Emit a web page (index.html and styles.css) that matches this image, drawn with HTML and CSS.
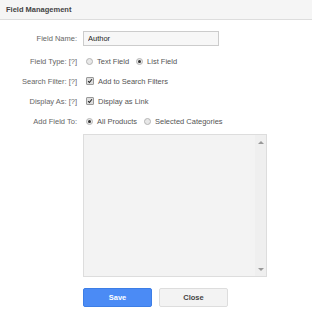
FILE: index.html
```html
<!DOCTYPE html>
<html lang="en">
<head>
    <meta charset="UTF-8">
    <title>Field Management</title>
    <link rel="stylesheet" href="styles.css">
</head>
<body>
<div class="panel">
    <div class="panelHead">Field Management</div>
    <form class="fieldForm">
        <div class="row rowInput">
            <label class="lbl">Field Name:</label>
            <div class="ctl"><input class="txt" type="text" value="Author"></div>
        </div>
        <div class="row">
            <span class="lbl">Field Type: [?]</span>
            <div class="ctl">
                <span class="radio"></span><span class="opt">Text Field</span>
                <span class="radio on"></span><span class="opt">List Field</span>
            </div>
        </div>
        <div class="row">
            <span class="lbl">Search Filter: [?]</span>
            <div class="ctl">
                <span class="check"><svg width="8" height="8" viewBox="0 0 8 8"><path d="M1.5 4.2 L3.2 6 L6.6 1.6" fill="none" stroke="#222" stroke-width="1.4"/></svg></span><span class="opt">Add to Search Filters</span>
            </div>
        </div>
        <div class="row">
            <span class="lbl">Display As: [?]</span>
            <div class="ctl">
                <span class="check"><svg width="8" height="8" viewBox="0 0 8 8"><path d="M1.5 4.2 L3.2 6 L6.6 1.6" fill="none" stroke="#222" stroke-width="1.4"/></svg></span><span class="opt">Display as Link</span>
            </div>
        </div>
        <div class="row">
            <span class="lbl">Add Field To:</span>
            <div class="ctl">
                <span class="radio on"></span><span class="opt">All Products</span>
                <span class="radio"></span><span class="opt">Selected Categories</span>
            </div>
        </div>
        <div class="row rowList">
            <span class="lbl"></span>
            <div class="listBox">
                <div class="listArea"></div>
                <div class="scrollBar">
                    <span class="arrUp"></span>
                    <span class="arrDown"></span>
                </div>
            </div>
        </div>
        <div class="row rowBtns">
            <span class="lbl"></span>
            <div class="ctl">
                <button type="button" class="btn btnSave">Save</button>
                <button type="button" class="btn btnClose">Close</button>
            </div>
        </div>
    </form>
</div>
</body>
</html>
```

FILE: styles.css
```css
body {
    margin: 0;
    font-family: "Liberation Sans", Arial, sans-serif;
    font-size: 7.5px;
    color: #555;
    background: #fff;
}

.panelHead {
    height: 19px;
    line-height: 19px;
    padding-left: 6px;
    background: #f5f5f5;
    border-bottom: 1px solid #ddd;
    font-weight: bold;
    color: #444;
}

.fieldForm {
    padding-top: 11px;
}

.row {
    display: grid;
    grid-template-columns: 77px 1fr;
    column-gap: 6px;
    align-items: center;
    height: 20px;
}

.rowInput {
    height: 15px;
    margin-bottom: 5px;
}

.lbl {
    text-align: right;
    color: #666;
}

.ctl {
    display: flex;
    align-items: center;
}

.txt {
    box-sizing: border-box;
    width: 136px;
    height: 15px;
    margin: 0;
    padding: 0 4px;
    border: 1px solid #ccc;
    background: #f7f7f7;
    font-family: inherit;
    font-size: 7.5px;
    color: #222;
    outline: none;
}

.radio {
    box-sizing: border-box;
    width: 7px;
    height: 7px;
    margin: 0 4px 0 3px;
    border: 1px solid #b5b5b5;
    border-radius: 50%;
    background: #e8e8e8;
    position: relative;
}

.radio.on::after {
    content: "";
    position: absolute;
    left: 1px;
    top: 1px;
    width: 3px;
    height: 3px;
    border-radius: 50%;
    background: #333;
}

.check {
    box-sizing: border-box;
    display: flex;
    align-items: center;
    justify-content: center;
    width: 8px;
    height: 8px;
    margin: 0 4px 0 3px;
    border: 1px solid #999;
    border-radius: 1px;
    background: #ddd;
}

.opt {
    margin-right: 4px;
    color: #555;
}

.rowList {
    height: auto;
    margin-top: 3px;
    align-items: start;
}

.listBox {
    box-sizing: border-box;
    display: flex;
    width: 184px;
    height: 143px;
    border: 1px solid #ddd;
    background: #f3f3f3;
}

.listArea {
    flex: 1;
}

.scrollBar {
    width: 11px;
    background: #efefef;
    display: flex;
    flex-direction: column;
    justify-content: space-between;
    align-items: center;
    padding: 6px 0 5px;
}

.arrUp {
    width: 0;
    height: 0;
    border-left: 3px solid transparent;
    border-right: 3px solid transparent;
    border-bottom: 3px solid #999;
}

.arrDown {
    width: 0;
    height: 0;
    border-left: 3px solid transparent;
    border-right: 3px solid transparent;
    border-top: 3px solid #999;
}

.rowBtns {
    margin-top: 11px;
    height: 19px;
}

.btn {
    box-sizing: border-box;
    width: 69px;
    height: 19px;
    margin: 0 7px 0 0;
    padding: 0;
    border-radius: 2px;
    font-family: inherit;
    font-size: 7.5px;
    font-weight: bold;
}

.btnSave {
    background: #4b8bf5;
    border: 1px solid #3d7ee6;
    color: #fff;
}

.btnClose {
    background: #f3f3f3;
    border: 1px solid #ddd;
    color: #444;
}
```
